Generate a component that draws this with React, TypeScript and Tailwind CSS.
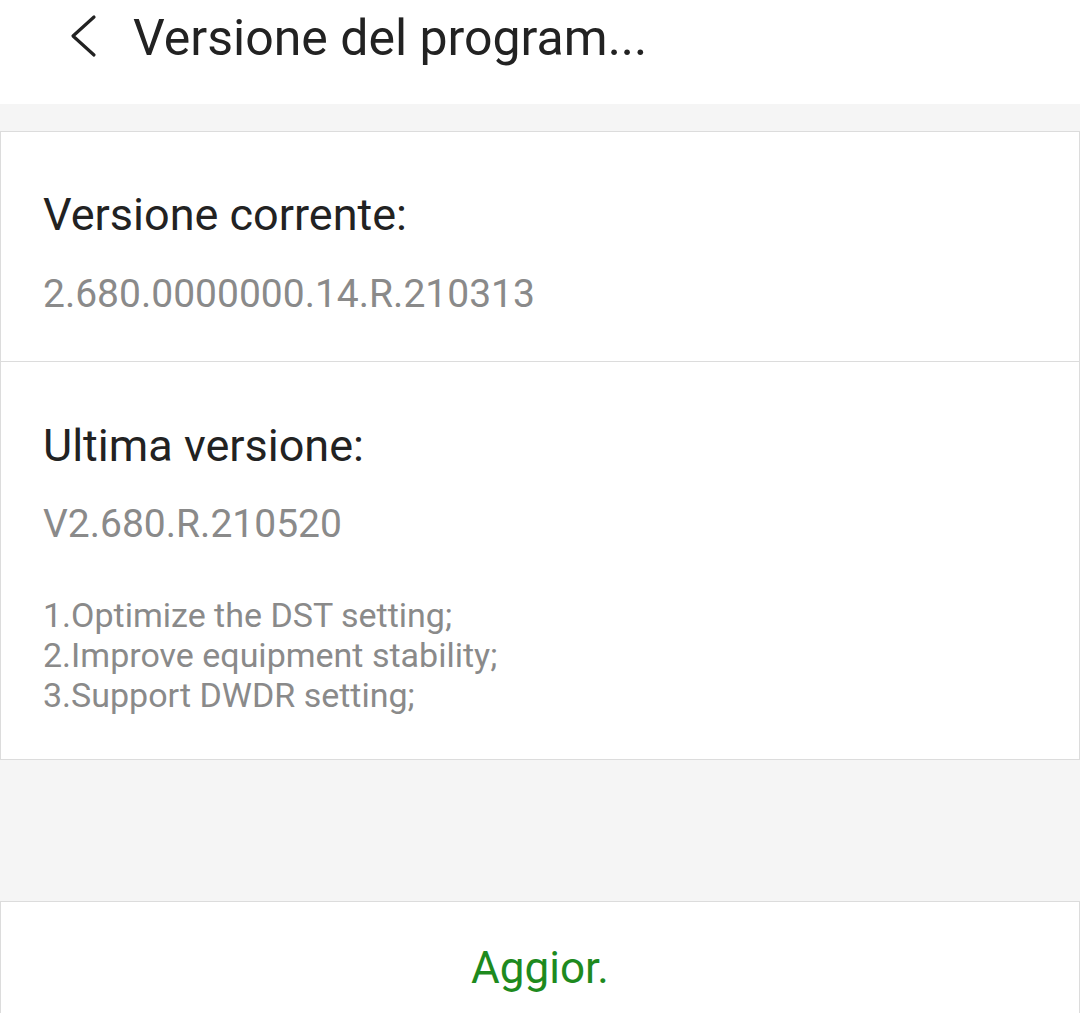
export default function App() {
  return (
    <div className="flex h-[1013px] w-[1080px] flex-col overflow-hidden bg-[#f5f5f5] font-['Roboto',sans-serif]">
      {/* header */}
      <div className="flex h-[104px] shrink-0 items-start bg-white pl-[68px]">
        <svg width="32" height="44" viewBox="0 0 32 44" fill="none" className="mt-[14px] mr-[33px]">
          <path d="M26 3 L5 22 L26 41" stroke="#222" strokeWidth="3.2" strokeLinecap="round" strokeLinejoin="round" />
        </svg>
        <h1 className="pt-[13px] text-[50px] leading-none text-[#222]">Versione del program...</h1>
      </div>

      <div className="h-[27px] shrink-0" />

      <div className="shrink-0 border border-[#dcdcdc] bg-white">
        <div className="h-[229px] px-[42px] pt-[60px]">
          <div className="text-[45px] leading-none text-[#222]">Versione corrente:</div>
          <div className="mt-[38px] text-[39px] leading-none text-[#8a8a8a]">2.680.0000000.14.R.210313</div>
        </div>
        <div className="h-[398px] border-t border-[#dcdcdc] px-[42px] pt-[61px]">
          <div className="text-[45px] leading-none text-[#222]">Ultima versione:</div>
          <div className="mt-[37px] text-[39px] leading-none text-[#8a8a8a]">V2.680.R.210520</div>
          <div className="mt-[51px] text-[34px] leading-[40px] text-[#8a8a8a]">
            <div>1.Optimize the DST setting;</div>
            <div>2.Improve equipment stability;</div>
            <div>3.Support DWDR setting;</div>
          </div>
        </div>
      </div>

      <div className="h-[141px] shrink-0" />

      <div className="flex flex-1 items-center justify-center border-x border-t border-[#dcdcdc] bg-white pt-[20px]">
        <span className="text-[44px] leading-none text-[#1e8a1e]">Aggior.</span>
      </div>
    </div>
  )
}
